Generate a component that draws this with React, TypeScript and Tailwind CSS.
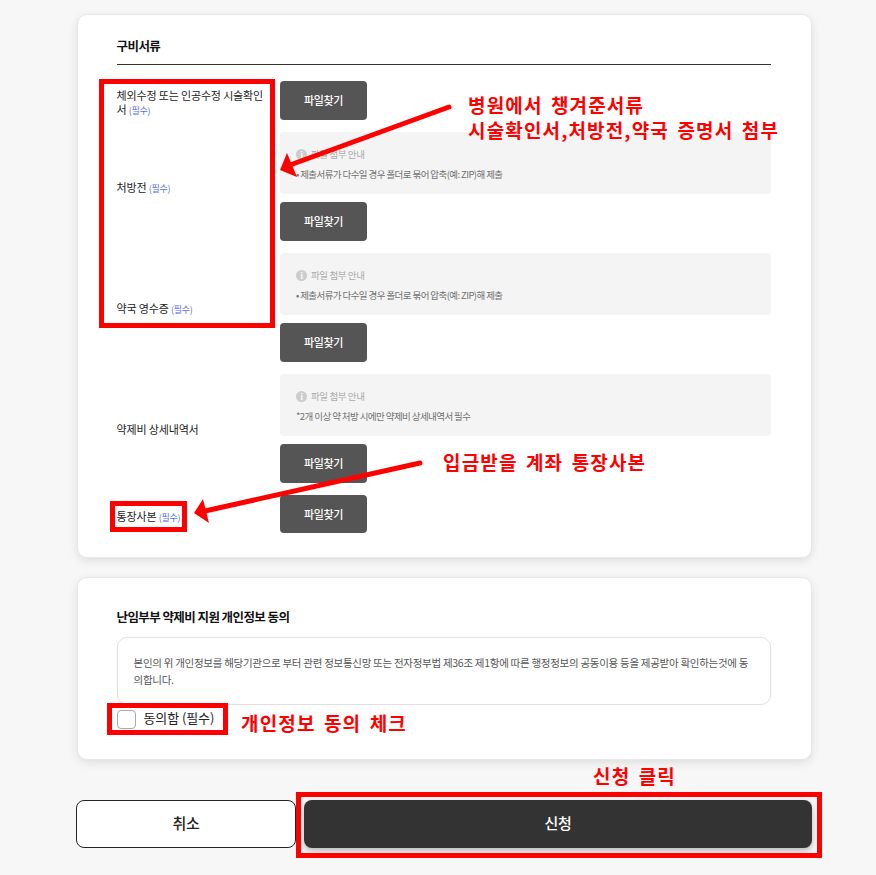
const kr = "font-['Noto_Sans_CJK_KR','Noto_Sans',sans-serif]";

function FileButton({ className = "" }: { className?: string }) {
  return (
    <button className={`flex h-[38.5px] w-[87px] items-center justify-center rounded-[4px] bg-[#555555] text-[11px] font-medium tracking-[-0.4px] text-white ${className}`}>
      파일찾기
    </button>
  );
}

function InfoBox({ text, className = "" }: { text: string; className?: string }) {
  return (
    <div className={`h-[62.5px] rounded-[4px] bg-[#f4f4f4] pl-4 pt-4 ${className}`}>
      <div className="flex h-[14px] items-center gap-[4px] text-[9.5px] tracking-[-0.4px] text-[#aaaaaa]">
        <span className="flex h-[11px] w-[11px] items-center justify-center rounded-full bg-[#cccccc] text-[8px] font-bold leading-none text-white">i</span>
        파일 첨부 안내
      </div>
      <p className="mt-[5px] text-[9.5px] leading-[14px] tracking-[-0.58px] text-[#707070]">{text}</p>
    </div>
  );
}

function Required() {
  return <span className="text-[9px] tracking-[-0.3px] text-[#5a6ee0]">(필수)</span>;
}

function Arrows() {
  return (
    <svg className="pointer-events-none absolute left-0 top-0" width="876" height="875">
      <line x1="449" y1="107" x2="290" y2="165" stroke="#ff0000" strokeWidth="5" strokeLinecap="round" />
      <polygon points="280,170 287,153 297,177" fill="#ff0000" />
      <line x1="420" y1="463" x2="205" y2="511" stroke="#ff0000" strokeWidth="5" strokeLinecap="round" />
      <polygon points="194,513 203,499 209,523" fill="#ff0000" />
    </svg>
  );
}

export default function App() {
  const note = "absolute whitespace-nowrap text-[19px] font-bold leading-[25px] tracking-[1.15px] text-[#ff0000] [word-spacing:3px]";
  const box = "pointer-events-none absolute border-[#ff0000]";

  return (
    <div className={`relative h-[875px] w-[876px] overflow-hidden bg-[#f7f7f7] ${kr}`}>
      <div className="ml-[76.5px] w-[735px] pt-[13.5px]">
        {/* 구비서류 */}
        <section className="h-[544px] rounded-[10px] border border-[#e8e8e8] bg-white pl-[39px] pr-[39.5px] pt-[22.5px] shadow-[0_3px_10px_rgba(0,0,0,0.1)]">
          <h2 className="h-[28px] border-b border-[#333333] pb-[7px] text-[12.5px] font-bold leading-[18px] tracking-[-0.55px] text-[#111111]">구비서류</h2>
          <div className="mt-[16px] flex">
            <div className="w-[163.5px] text-[11px] leading-[14px] tracking-[-0.15px] text-[#222222]">
              <p className="mt-[7px] w-[150px]">체외수정 또는 인공수정 시술확인서 <Required /></p>
              <p className="mt-[62px]">처방전 <Required /></p>
              <p className="mt-[105px]">약국 영수증 <Required /></p>
              <p className="mt-[105px]">약제비 상세내역서</p>
              <p className="mt-[73px]">통장사본 <Required /></p>
            </div>
            <div className="flex-1">
              <FileButton />
              <InfoBox className="mt-[12px]" text="• 제출서류가 다수일 경우 폴더로 묶어 압축(예: ZIP)해 제출" />
              <FileButton className="mt-[8px]" />
              <InfoBox className="mt-[12px]" text="• 제출서류가 다수일 경우 폴더로 묶어 압축(예: ZIP)해 제출" />
              <FileButton className="mt-[8px]" />
              <InfoBox className="mt-[12px]" text="*2개 이상 약 처방 시에만 약제비 상세내역서 필수" />
              <FileButton className="mt-[8px]" />
              <FileButton className="mt-[12px]" />
            </div>
          </div>
        </section>

        {/* 개인정보 동의 */}
        <section className="mt-[19.5px] h-[183px] rounded-[10px] border border-[#e8e8e8] bg-white pl-[39px] pr-[39.5px] pt-[30px] shadow-[0_3px_10px_rgba(0,0,0,0.1)]">
          <h2 className="text-[12.5px] font-bold leading-[18px] tracking-[-0.58px] text-[#111111]">난임부부 약제비 지원 개인정보 동의</h2>
          <div className="mt-[11px] h-[68px] rounded-[10px] border border-[#e0e0e0] px-4 pt-[16px] text-[10.5px] leading-[17px] tracking-[-0.28px] text-[#555555]">
            본인의 위 개인정보를 해당기관으로 부터 관련 정보통신망 또는 전자정부법 제36조 제1항에 따른 행정정보의 공동이용 등을 제공받아 확인하는것에 동의합니다.
          </div>
          <label className="mt-[5px] flex items-center gap-2">
            <span className="h-[19px] w-[19px] rounded-[4px] border border-[#aaaaaa] bg-white" />
            <span className="-mt-[3px] text-[13px] leading-[18px] tracking-[-0.1px] text-[#222222]">동의함 (필수)</span>
          </label>
        </section>
      </div>

      <div className="ml-[76px] mt-[40px] flex w-[736px] gap-2">
        <button className="h-[48px] w-[220px] rounded-[8px] border border-[#222222] bg-white pb-[2px] text-[15px] font-medium tracking-[-0.3px] text-[#222222]">취소</button>
        <button className="h-[48px] flex-1 rounded-[8px] bg-[#333333] pb-[2px] text-[15px] font-medium tracking-[-0.3px] text-white shadow-[0_3px_6px_rgba(0,0,0,0.25)]">신청</button>
      </div>

      {/* 빨간 안내 표시 */}
      <div className={`${box} left-[99px] top-[79px] h-[249px] w-[176px] border-[5px]`} />
      <div className={`${box} left-[110px] top-[501px] h-[31px] w-[77px] border-[5px]`} />
      <div className={`${box} left-[107px] top-[703px] h-[32px] w-[121px] border-[5px]`} />
      <div className={`${box} left-[296px] top-[792px] h-[66px] w-[526px] border-[5px]`} />
      <Arrows />
      <p className={`${note} left-[468px] top-[92px]`}>병원에서 챙겨준서류</p>
      <p className={`${note} left-[468px] top-[117px]`}>시술확인서,처방전,약국 증명서 첨부</p>
      <p className={`${note} left-[443px] top-[449px]`}>입금받을 계좌 통장사본</p>
      <p className={`${note} left-[241px] top-[710px]`}>개인정보 동의 체크</p>
      <p className={`${note} left-[593px] top-[763px]`}>신청 클릭</p>
    </div>
  );
}
